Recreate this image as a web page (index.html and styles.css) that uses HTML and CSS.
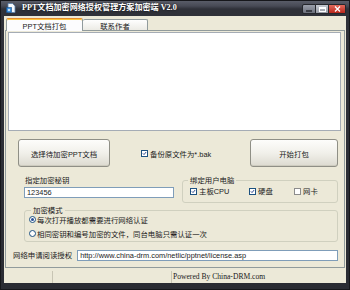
FILE: index.html
```html
<!DOCTYPE html>
<html lang="zh-CN">
<head>
    <meta charset="UTF-8">
    <title>PPT文档加密网络授权管理方案加密端 V2.0</title>
    <link rel="stylesheet" href="styles.css">
</head>
<body>

<div class="window">
    <div class="titlebar">
        <svg class="app-icon" viewBox="0 0 10 10">
            <path d="M2 0.5h4.5l2.5 2.5v6.5h-7z" fill="#f4f8fc" stroke="#5a7fa8" stroke-width="0.8"/>
            <rect x="0.5" y="4.5" width="5" height="5" fill="#2f86d6" stroke="#1d4f86" stroke-width="0.6"/>
            <path d="M1.8 7h2.4M3 5.8v2.4" stroke="#fff" stroke-width="0.9"/>
        </svg>
        <span class="title">PPT文档加密网络授权管理方案加密端 V2.0</span>
        <div class="caption-buttons">
            <span class="cap cap-min"><span class="glyph-min"></span></span>
            <span class="cap cap-max"><span class="glyph-max"></span></span>
            <span class="cap cap-close">
                <svg viewBox="0 0 7 6" class="glyph-close"><path d="M1 0.5l5 5M6 0.5l-5 5" stroke="#fff" stroke-width="1.3"/></svg>
            </span>
        </div>
    </div>

    <div class="client">
        <div class="tabs">
            <div class="tab active">PPT文档打包</div>
            <div class="tab">联系作者</div>
        </div>

        <div class="panel">
            <div class="memo"></div>

            <div class="row-actions">
                <button class="btn btn-select">选择待加密PPT文档</button>
                <label class="check check-backup">
                    <span class="box checked"><svg viewBox="0 0 7 7"><path d="M1.2 3.3l1.6 1.7 3-3.6" fill="none" stroke="#24418a" stroke-width="1.3"/></svg></span>
                    备份原文件为*.bak
                </label>
                <button class="btn btn-start">开始打包</button>
            </div>

            <div class="row-options">
                <div class="key-field">
                    <div class="field-label">指定加密秘钥</div>
                    <div class="textbox">123456</div>
                </div>
                <fieldset class="group group-bind">
                    <legend>绑定用户电脑</legend>
                    <div class="bind-list">
                        <label class="check">
                            <span class="box checked"><svg viewBox="0 0 7 7"><path d="M1.2 3.3l1.6 1.7 3-3.6" fill="none" stroke="#24418a" stroke-width="1.3"/></svg></span>
                            主板CPU
                        </label>
                        <label class="check">
                            <span class="box checked"><svg viewBox="0 0 7 7"><path d="M1.2 3.3l1.6 1.7 3-3.6" fill="none" stroke="#24418a" stroke-width="1.3"/></svg></span>
                            硬盘
                        </label>
                        <label class="check">
                            <span class="box"></span>
                            网卡
                        </label>
                    </div>
                </fieldset>
            </div>

            <fieldset class="group group-mode">
                <legend>加密模式</legend>
                <label class="radio"><span class="dot on"></span>每次打开播放都需要进行网络认证</label>
                <label class="radio"><span class="dot"></span>相同密钥和编号加密的文件，同台电脑只需认证一次</label>
            </fieldset>

            <div class="row-url">
                <span class="field-label">网络申请阅读授权</span>
                <div class="textbox url">http://www.china-drm.com/netlic/pptnet/license.asp</div>
            </div>
        </div>

        <div class="statusbar">
            <div class="status-cell cell-a"></div>
            <div class="status-cell cell-b"></div>
            <div class="status-cell cell-c">Powered By China-DRM.com</div>
        </div>
    </div>
</div>

</body>
</html>
```

FILE: styles.css
```css
* {
    box-sizing: border-box;
}
body {
    margin: 0;
    font-family: "Liberation Sans", "Noto Sans CJK SC", sans-serif;
    font-size: 7.4px;
    color: #1a1a1a;
    background: #2b2d35;
}
.window {
    width: 350px;
    height: 290px;
    display: flex;
    flex-direction: column;
    background: linear-gradient(#5c606c, #474a55 6px, #2f3139 9px, #2a2c33);
    box-shadow: inset 0 0 0 1px #16171b;
}

/* title bar */
.titlebar {
    height: 16px;
    display: flex;
    align-items: center;
    padding-left: 6px;
}
.app-icon {
    width: 10px;
    height: 10px;
}
.title {
    margin-left: 6px;
    color: #fff;
    font-family: "Liberation Serif", "Noto Sans CJK SC", serif;
    font-weight: bold;
    font-size: 8.1px;
    line-height: 10px;
    white-space: nowrap;
    text-shadow: 0 0 2px #000;
}
.caption-buttons {
    display: flex;
    align-self: flex-start;
    margin: 4px 4px 0 auto;
}
.cap {
    height: 10px;
    display: flex;
    align-items: center;
    justify-content: center;
    border: 1px solid #25272d;
}
.cap-min {
    width: 14px;
    border-radius: 2px 0 0 2px;
    background: linear-gradient(#9a9fab, #6c707c);
}
.cap-max {
    width: 13px;
    border-left: none;
    background: linear-gradient(#c3c7cf, #979ba5);
}
.cap-close {
    width: 17px;
    border-left: none;
    border-radius: 0 2px 2px 0;
    background: linear-gradient(#e36a5c, #b9261b);
}
.glyph-min {
    width: 6px;
    height: 2px;
    margin-top: 3px;
    background: #fff;
    border: 1px solid #3a3d45;
}
.glyph-max {
    width: 7px;
    height: 5px;
    border: 1px solid #fff;
    border-top-width: 2px;
}
.glyph-close {
    width: 7px;
    height: 6px;
}

/* client area */
.client {
    flex: 1;
    margin: 0 4px 7px;
    display: flex;
    flex-direction: column;
    background: #ece9d8;
}
.tabs {
    height: 14px;
    display: flex;
    align-items: flex-end;
    padding-left: 2px;
}
.tab {
    height: 11px;
    display: flex;
    align-items: center;
    justify-content: center;
    border: 1px solid #919b9c;
    border-bottom: none;
    border-left: none;
    border-radius: 2px 2px 0 0;
    background: linear-gradient(#fefefe, #ecebe5);
    width: 65px;
}
.tab.active {
    position: relative;
    z-index: 1;
    height: 13px;
    width: 77px;
    margin-bottom: -1px;
    border-left: 1px solid #919b9c;
    border-top: 1px solid #e68b2c;
    box-shadow: inset 0 1px #ffc73c;
    background: #fcfcfe;
}
.panel {
    height: 238px;
    margin: 0 1px;
    padding: 1px 3px 0 2px;
    border: 1px solid #919b9c;
    background: #ece9d8;
}
.memo {
    height: 99px;
    background: #fff;
    border: 1px solid #a5acb5;
}

/* buttons and checks */
.row-actions {
    height: 28px;
    margin-top: 8px;
    display: flex;
    align-items: center;
}
.btn {
    height: 28px;
    padding: 0;
    font: inherit;
    color: #1a1a1a;
    border: 1px solid #8f8f86;
    border-radius: 3px;
    background: linear-gradient(#fdfdfb, #f1f0ea 50%, #dcdad0);
    box-shadow: inset 0 -1px #cdcbbf;
}
.btn-select {
    width: 92px;
    margin-left: 10px;
}
.btn-start {
    width: 88px;
    margin: 0 3px 0 auto;
}
.check {
    display: flex;
    align-items: center;
    gap: 2px;
    white-space: nowrap;
}
.check-backup {
    margin-left: 31px;
}
.box {
    width: 7px;
    height: 7px;
    display: flex;
    border: 1px solid #8c8c8c;
    background: #fff;
}
.box.checked {
    border-color: #1c5180;
}
.box svg {
    width: 5px;
    height: 5px;
}

.row-options {
    display: flex;
    align-items: flex-start;
}
.key-field {
    width: 150px;
    margin: 9px 0 0 16px;
}
.field-label {
    line-height: 10px;
    white-space: nowrap;
}
.key-field .field-label {
    margin-left: 1px;
}
.textbox {
    height: 11px;
    margin-top: 1px;
    padding-left: 2px;
    line-height: 9px;
    background: #fff;
    border: 1px solid #7f9db9;
    white-space: nowrap;
    overflow: hidden;
}

/* group boxes */
.group {
    margin: 0;
    border: 1px solid #d0d0bf;
    border-radius: 3px;
}
.group legend {
    padding: 0 2px;
    line-height: 9px;
}
.group-bind {
    width: 156px;
    margin: 9px 0 0 8px;
    padding: 2px 4px 6px 7px;
}
.group-bind legend {
    margin-left: -2px;
}
.bind-list {
    display: grid;
    grid-template-columns: 59px 45px auto;
    line-height: 9px;
}
.group-mode {
    margin: 3px 3px 0 16px;
    padding: 0 4px 3px 4px;
}
.group-mode legend {
    margin-left: 2px;
}
.radio {
    display: flex;
    align-items: center;
    gap: 1px;
    height: 9px;
}
.radio + .radio {
    margin-top: 5px;
}
.dot {
    width: 7px;
    height: 7px;
    display: flex;
    align-items: center;
    justify-content: center;
    border: 1px solid #1c5180;
    border-radius: 50%;
    background: #fff;
}
.dot.on::after {
    content: "";
    width: 3px;
    height: 3px;
    border-radius: 50%;
    background: #2a4f9a;
}

.row-url {
    margin-top: 8px;
    display: flex;
    align-items: center;
}
.row-url .field-label {
    margin-left: 5px;
}
.textbox.url {
    flex: 1;
    margin: 0 3px 0 5px;
    color: #222;
}

/* status bar */
.statusbar {
    flex: 1;
    display: flex;
    padding-top: 3px;
}
.status-cell {
    line-height: 12px;
    border-right: 1px solid #c8c5b4;
}
.cell-a {
    width: 49px;
}
.cell-b {
    width: 119px;
}
.cell-c {
    flex: 1;
    border-right: none;
    padding-left: 1px;
    font-family: "Liberation Serif", serif;
    font-size: 7.6px;
}
```
